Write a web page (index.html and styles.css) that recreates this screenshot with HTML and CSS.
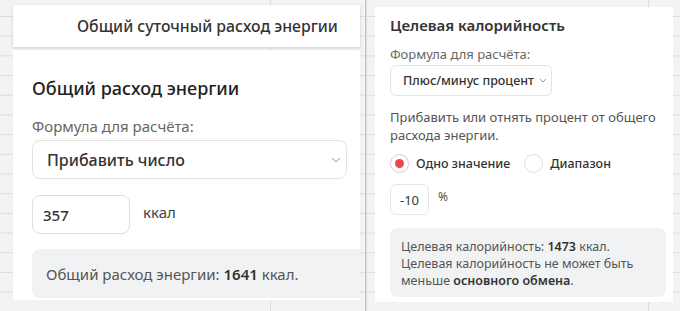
FILE: index.html
```html
<!DOCTYPE html>
<html lang="ru">
<head>
    <meta charset="UTF-8">
    <meta name="viewport" content="width=device-width, initial-scale=1.0">
    <title>Калькулятор калорий</title>
    <link rel="stylesheet" href="styles.css">
</head>
<body>

<div class="pane pane-left">
    <div class="sheet-header">Общий суточный расход энергии</div>
    <div class="sheet-body">
        <h2>Общий расход энергии</h2>
        <label class="field-label">Формула для расчёта:</label>
        <div class="select select-big">
            <span>Прибавить число</span>
            <svg class="chevron" width="10" height="6" viewBox="0 0 10 6"><path d="M1 1l4 4 4-4" fill="none" stroke="#999" stroke-width="1"/></svg>
        </div>
        <div class="value-row">
            <div class="num-input num-big">357</div>
            <span class="unit">ккал</span>
        </div>
        <div class="result result-big">Общий расход энергии: <b>1641</b> ккал.</div>
    </div>
</div>

<div class="divider"></div>

<div class="pane pane-right">
    <div class="card">
        <div class="card-title">Целевая калорийность</div>
        <label class="field-label small">Формула для расчёта:</label>
        <div class="select select-small">
            <span>Плюс/минус процент</span>
            <svg class="chevron" width="8" height="5" viewBox="0 0 8 5"><path d="M1 1l3 3 3-3" fill="none" stroke="#999" stroke-width="1"/></svg>
        </div>
        <p class="hint">Прибавить или отнять процент от общего расхода энергии.</p>
        <div class="radios">
            <span class="radio checked"><i></i></span>
            <span class="radio-label">Одно значение</span>
            <span class="radio"></span>
            <span class="radio-label">Диапазон</span>
        </div>
        <div class="value-row">
            <div class="num-input num-small">-10</div>
            <span class="unit small">%</span>
        </div>
        <div class="result result-small">
            <div>Целевая калорийность: <b>1473</b> ккал.</div>
            <div>Целевая калорийность не может быть</div>
            <div>меньше <b>основного обмена</b>.</div>
        </div>
    </div>
</div>

</body>
</html>
```

FILE: styles.css
```css
/* Global */
body {
    margin: 0;
    width: 680px;
    height: 311px;
    overflow: hidden;
    display: flex;
    font-family: 'Noto Sans', 'Open Sans', sans-serif;
    color: #333;
}

/* Spreadsheet grid behind the sheets */
.pane {
    height: 311px;
    background-color: #f3f3f3;
    background-image:
        linear-gradient(to right, #dcdcdc 1px, transparent 1px),
        linear-gradient(to bottom, #dcdcdc 1px, transparent 1px);
    background-size: 94px 19.7px;
}

.pane-left {
    width: 365px;
    flex-shrink: 0;
    background-position: 82px 16px;
}

.pane-right {
    flex: 1;
    min-width: 0;
    background-position: 0 16px;
}

.divider {
    width: 1px;
    flex-shrink: 0;
    background: #c4c4c4;
}

/* Left sheet */
.sheet-header {
    margin: 5px 0 0 13px;
    width: 347px;
    height: 42px;
    box-sizing: border-box;
    padding-left: 64px;
    display: flex;
    align-items: center;
    background: #fff;
    font-size: 15.8px;
    font-weight: 500;
    color: #333;
    box-shadow: 0 1px 3px rgba(0, 0, 0, 0.15);
    position: relative;
}

.sheet-body {
    margin: 3px 0 0 13px;
    width: 347px;
    height: 250px;
    box-sizing: border-box;
    padding: 24px 0 0 19px;
    background: #fff;
    overflow: hidden;
}

h2 {
    margin: 0;
    font-size: 18px;
    line-height: 28px;
    font-weight: 500;
    color: #222;
}

.field-label {
    display: block;
    margin-top: 13px;
    font-size: 15px;
    line-height: 22px;
    color: #666;
}

.select {
    display: flex;
    align-items: center;
    justify-content: space-between;
    box-sizing: border-box;
    border: 1px solid #e3e3e3;
    background: #fff;
    font-weight: 500;
    color: #333;
    white-space: nowrap;
}

.select-big {
    margin-top: 3px;
    width: 315px;
    height: 39px;
    padding: 0 5px 0 14px;
    border-radius: 8px;
    font-size: 16px;
}

.value-row {
    display: flex;
    align-items: center;
}

.num-input {
    box-sizing: border-box;
    border: 1px solid #ddd;
    display: flex;
    align-items: center;
    color: #333;
    font-weight: 500;
}

.num-big {
    margin-top: 16px;
    width: 98px;
    height: 39px;
    padding-left: 10px;
    border-radius: 8px;
    font-size: 15px;
}

.unit {
    margin: 16px 0 0 13px;
    font-size: 15px;
    color: #444;
    position: relative;
    top: -3px;
}

.result {
    background: #f1f2f4;
    color: #555;
}

.result b {
    font-weight: 600;
    color: #333;
}

.result-big {
    margin-top: 15px;
    width: 360px;
    height: 49px;
    box-sizing: border-box;
    padding-left: 14px;
    display: flex;
    align-items: center;
    border-radius: 8px;
    font-size: 15px;
    white-space: pre;
}

/* Right card */
.card {
    margin: 7px 7px 0 9px;
    height: 295px;
    box-sizing: border-box;
    padding: 8px 7px 0 15px;
    background: #fff;
}

.card-title {
    font-size: 15px;
    line-height: 20px;
    font-weight: 600;
    color: #333;
}

.field-label.small {
    margin-top: 10px;
    font-size: 13px;
    line-height: 18px;
}

.select-small {
    margin-top: 2px;
    width: 162px;
    height: 31px;
    padding: 0 4px 0 12px;
    border-radius: 6px;
    font-size: 12.5px;
}

.hint {
    margin: 12px 0 0;
    font-size: 13px;
    line-height: 18px;
    color: #555;
}

.radios {
    margin-top: 9px;
    height: 20px;
    display: flex;
    align-items: center;
}

.radio {
    width: 19px;
    height: 19px;
    box-sizing: border-box;
    border: 1px solid #dedede;
    border-radius: 50%;
    display: flex;
    align-items: center;
    justify-content: center;
}

.radio.checked {
    border-color: #ecc4c6;
}

.radio.checked i {
    width: 9px;
    height: 9px;
    border-radius: 50%;
    background: #e84a50;
}

.radio-label {
    margin: 0 14px 0 7px;
    font-size: 12.5px;
    font-weight: 500;
    color: #333;
}

.num-small {
    margin-top: 11px;
    width: 39px;
    height: 31px;
    padding-left: 9px;
    border-radius: 6px;
    border-color: #e8e8e8;
    font-size: 13px;
    font-weight: 400;
}

.unit.small {
    margin: 11px 0 0 9px;
    font-size: 12px;
    color: #555;
}

.result-small {
    margin-top: 13px;
    height: 69px;
    box-sizing: border-box;
    padding: 10px 8px 0 11px;
    border-radius: 8px;
    font-size: 12.5px;
    line-height: 17px;
}
```
